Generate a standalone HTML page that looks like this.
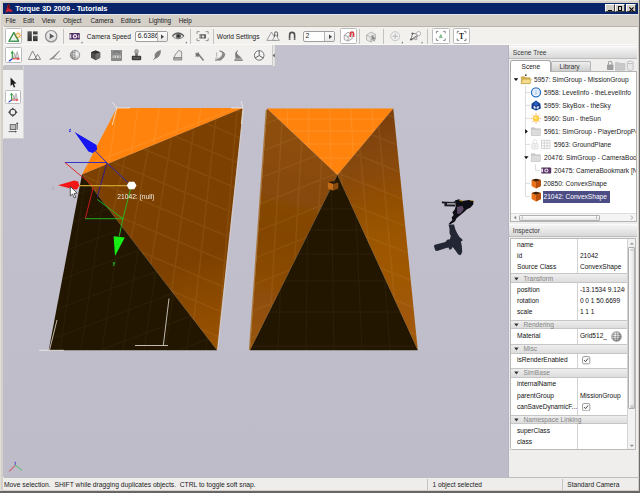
<!DOCTYPE html>
<html><head><meta charset="utf-8"><title>Torque 3D 2009 - Tutorials</title>
<style>
html,body{margin:0;padding:0;}
html{background:#d4d0c8;}
#root{position:absolute;left:0;top:0;width:640px;height:493px;filter:blur(0.35px);}
body{width:640px;height:493px;overflow:hidden;background:#d4d0c8;position:relative;
 font-family:"Liberation Sans",sans-serif;font-size:6.6px;color:#111;line-height:8px;}
.a{position:absolute;}
.t{position:absolute;white-space:pre;}
#title{left:3px;top:2.6px;width:634.6px;height:11.2px;background:#0a246a;}
#title .t{color:#fff;font-weight:bold;font-size:7.45px;left:12.2px;top:2.4px;}
#menu{left:3px;top:13.6px;width:634.6px;height:12.4px;background:#d4d0c8;border-top:0.6px solid #e6e6ee;box-sizing:border-box;}
#menu .t{top:2.5px;font-size:6.4px;color:#222;}
#tb1{left:3px;top:25.6px;width:634.6px;height:19.6px;background:#f2f1ee;border-top:0.8px solid #b9b5ad;border-bottom:0.6px solid #f9f9f8;box-sizing:border-box;}
#view{left:3px;top:45px;width:505.4px;height:432px;background:linear-gradient(#c3c1cd,#bfbcc9);overflow:hidden;}
#tb2{left:3px;top:45.2px;width:269px;height:19.7px;background:#f1f0ee;box-sizing:border-box;}
#ltb{left:3px;top:66px;width:21px;height:73px;background:#efefef;border-right:1px solid #d8d8d8;border-bottom:1px solid #d0d0d0;box-sizing:border-box;}
#rp{left:508px;top:45px;width:129.6px;height:432px;background:#efeeed;border-left:1px solid #b6b4be;box-sizing:border-box;}
#status{left:3px;top:477px;width:634.6px;height:13.4px;background:#eeedec;border-top:1px solid #bdbdbd;box-sizing:border-box;}
#status .t{top:2.5px;color:#222;}
.sel{position:absolute;background:#fff;border:1px solid #bcbcbc;border-radius:1.5px;box-sizing:border-box;}
.hdr{background:linear-gradient(#f5f5f5,#d8d8d8);border-top:1px solid #fbfbfb;border-bottom:1px solid #bdbdbd;box-sizing:border-box;color:#3a3a3a}
.wb{position:absolute;top:1.6px;width:9.4px;height:8px;background:#d4d0c8;box-sizing:border-box;border:0.7px solid;border-color:#fff #404040 #404040 #fff}
.sep{position:absolute;width:1px;background:#c2c2c2;}
</style></head><body><div id="root">
<div id="title" class="a"><span class="t">Torque 3D 2009 - Tutorials</span><svg class="a" style="left:0;top:0" width="14" height="11" viewBox="3 3 14 11"><path d="M8.2,3.6 L5.4,12.8 L8.2,11.6 L12.6,12 L11.4,9.4 L9.2,8.6 L9.6,5.4 Z" fill="#c8202c"/><path d="M8.2,3.6 L7.4,8.4 L9.2,8.6 L9.6,5.4 Z" fill="#7a1018"/></svg><div class="wb" style="left:602.4px"><div class="a" style="left:1.8px;top:5px;width:3.6px;height:1.3px;background:#000"></div></div><div class="wb" style="left:612.2px"><div class="a" style="left:1.4px;top:1.2px;width:4.6px;height:4.4px;border:0.7px solid #000;border-top-width:1.4px;box-sizing:border-box"></div></div><div class="wb" style="left:623.4px"><svg class="a" style="left:1.6px;top:1.4px" width="5" height="5" viewBox="0 0 5 5"><path d="M0.4,0.4 L4.6,4.6 M4.6,0.4 L0.4,4.6" stroke="#000" stroke-width="1.1"/></svg></div></div>
<div id="menu" class="a"><span class="t" style="left:2.5px">File</span><span class="t" style="left:20px">Edit</span><span class="t" style="left:38.7px">View</span><span class="t" style="left:60px">Object</span><span class="t" style="left:87.5px">Camera</span><span class="t" style="left:117.7px">Editors</span><span class="t" style="left:145.7px">Lighting</span><span class="t" style="left:175.7px">Help</span></div>
<div id="tb1" class="a"><div class="a" style="left:0;top:0.6px"><div class="sel" style="left:2.2px;top:1.2px;width:17.3px;height:15.8px"></div><div class="sel" style="left:336.8px;top:1.2px;width:17.5px;height:15.8px"></div><div class="sel" style="left:429.0px;top:1.0px;width:17.5px;height:15.6px"></div><div class="sel" style="left:450.0px;top:1.0px;width:17.2px;height:15.6px"></div><div class="sep" style="left:60.2px;top:2px;height:15px"></div><div class="sep" style="left:187.0px;top:2px;height:15px"></div><div class="sep" style="left:210.0px;top:2px;height:15px"></div><div class="sep" style="left:356.0px;top:2px;height:15px"></div><div class="sep" style="left:380.0px;top:2px;height:15px"></div><div class="sep" style="left:424.0px;top:2px;height:15px"></div><div class="a" style="left:132.2px;top:3.4px;width:32.4px;height:11.2px;background:#fdfdfd;border:1px solid #9f9f9f;border-radius:2px;box-sizing:border-box;overflow:hidden"><span class="t" style="left:1.6px;top:0.9px;font-size:6.8px;color:#222">6.6386</span><div class="a" style="left:20.4px;top:0;width:11.0px;height:10px;background:linear-gradient(#fbfbfb,#e6e6e6);border-left:1px solid #b4b4b4"></div><svg class="a" style="left:24.0px;top:2.2px" width="5" height="6" viewBox="0 0 5 6"><path d="M1,0.6 L4,2.8 L1,5 Z" fill="#444"/></svg></div><div class="a" style="left:300.0px;top:3.4px;width:31.6px;height:11.2px;background:#fdfdfd;border:1px solid #9f9f9f;border-radius:2px;box-sizing:border-box;overflow:hidden"><span class="t" style="left:1.6px;top:0.9px;font-size:6.8px;color:#222">2</span><div class="a" style="left:20.4px;top:0;width:10.2px;height:10px;background:linear-gradient(#fbfbfb,#e6e6e6);border-left:1px solid #b4b4b4"></div><svg class="a" style="left:24.0px;top:2.2px" width="5" height="6" viewBox="0 0 5 6"><path d="M1,0.6 L4,2.8 L1,5 Z" fill="#444"/></svg></div><span class="t" style="left:83.8px;top:5.799999999999997px;font-size:6.55px;color:#222">Camera Speed</span><span class="t" style="left:213.8px;top:5.700000000000003px;font-size:6.6px;color:#222">World Settings</span><svg class="a" style="left:0;top:-1px" width="634" height="19" viewBox="3 26 634 19"><defs><filter id="b4"><feGaussianBlur stdDeviation="0.3"/></filter><linearGradient id="gd" x1="0" y1="0" x2="0" y2="1"><stop offset="0" stop-color="#5a5a5a"/><stop offset="1" stop-color="#2e2e2e"/></linearGradient><radialGradient id="sg2" cx="0.62" cy="0.38" r="0.75"><stop offset="0" stop-color="#fbfbfb"/><stop offset="0.65" stop-color="#c4c4c4"/><stop offset="1" stop-color="#777"/></radialGradient><radialGradient id="gp" cx="0.5" cy="0.4" r="0.7"><stop offset="0" stop-color="#fafafa"/><stop offset="1" stop-color="#d0d0d0"/></radialGradient></defs><g filter="url(#b4)"><path d="M13.8,32.6 L9,41.2 H18.7 Z" fill="#eef5ee" stroke="#3f9450" stroke-width="1.1" stroke-linejoin="round"/><g stroke="#f09a3a" stroke-width="0.7"><path d="M18,31.6 v7.6 M14.2,35.4 h7.6 M15.3,32.7 l5.4,5.4 M20.7,32.7 l-5.4,5.4"/></g><circle cx="18" cy="35.4" r="2.1" fill="#fde9b8" stroke="#f0922e" stroke-width="0.7"/><path d="M13.8,32.6 L9,41.2 H18.7 Z" fill="none" stroke="#3f9450" stroke-width="1.1" stroke-linejoin="round"/><rect x="27.5" y="31.3" width="4.3" height="9.8" fill="url(#gd)"/><rect x="33" y="31.3" width="4.6" height="3.1" fill="url(#gd)"/><rect x="33" y="35.8" width="4.6" height="5.3" fill="url(#gd)"/><circle cx="51.2" cy="36.2" r="5.7" fill="url(#gp)" stroke="#8e8e8e" stroke-width="1.2"/><path d="M49.7,33.3 V39.1 L54.2,36.2 Z" fill="#5a5a5a"/><rect x="69.3" y="33" width="10.6" height="6.6" rx="0.9" fill="#4f2f60"/><rect x="69.3" y="34.2" width="2" height="4.2" fill="#d9cfe0"/><circle cx="75" cy="36.3" r="2.2" fill="#efe9f3"/><circle cx="75" cy="36.3" r="1.1" fill="#6a4a7c"/><rect x="78" y="34.6" width="1.3" height="3.4" fill="#b8a6c4"/><path d="M82.6,41.4 v1.8 h-1.8 z M187,41.4 v1.8 h-1.8 z M403,41.4 v1.8 h-1.8 z M422.6,41.4 v1.8 h-1.8 z" fill="#666"/><path d="M172.4,36.3 Q178,30.6 184,36.3 Q178,41.4 172.4,36.3 Z" fill="#e4e4e4" stroke="#7a7a7a" stroke-width="0.9"/><circle cx="178.4" cy="36" r="2.6" fill="#6c6c6c"/><circle cx="178.4" cy="36" r="1.3" fill="#2c2c2c"/><path d="M172.4,35.6 Q178,30 184,35.8" fill="none" stroke="#5a5a5a" stroke-width="1.1"/><g fill="none" stroke="#8c8c8c" stroke-width="0.9"><path d="M197,34 V31.6 H199.6 M205.6,31.6 H208.2 V34 M208.2,38.2 V40.6 H205.6 M199.6,40.6 H197 V38.2"/></g><rect x="199.4" y="34.3" width="6.6" height="4.3" rx="0.5" fill="#5e5e5e"/><circle cx="203" cy="36.5" r="1.2" fill="#ddd"/><rect x="199.4" y="35.2" width="1.2" height="2.4" fill="#cfcfcf"/><path d="M271.5,32 L266.8,40.4 H276 Z" fill="#f2f2f2" stroke="#8a8a8a" stroke-width="0.8"/><path d="M275.6,34.6 L272.4,40.4 H279.4 Z" fill="#f2f2f2" stroke="#8a8a8a" stroke-width="0.8"/><path d="M274.6,36.6 v-3.2 a1.5,1.6 0 0 1 3,0 v3.2" fill="none" stroke="#5a5a5a" stroke-width="1"/><path d="M289.6,40 V35 a2.5,2.6 0 0 1 5,0 V40" fill="none" stroke="#505050" stroke-width="1.6"/><path d="M288.6,38.8 h2 M293.6,38.8 h2" stroke="#cfcfcf" stroke-width="0.6"/><path d="M344.2,35.2 L348,32.4 L352.2,33.6 V38.6 L348.2,41 L344.2,39.6 Z M344.2,35.2 L348.2,36.6 L352.2,33.6 M348.2,36.6 V41" fill="#f3f3f3" stroke="#8a8a8a" stroke-width="0.7" stroke-linejoin="round"/><path d="M350.4,37 V33.6 a1.6,1.7 0 0 1 3.2,0 V37" fill="none" stroke="#e0383c" stroke-width="1.5"/><path d="M366.6,35 L371,32 L375.4,34.4 V39.4 L371,42 L366.6,40 Z M366.6,35 L371,37 L375.4,34.4 M371,37 V42" fill="#e6e6e6" stroke="#a4a4a4" stroke-width="0.7" stroke-linejoin="round"/><path d="M371.6,34.6 L371.8,40.6 L373.2,39.2 L374.2,41.4 L375,41 L374,38.9 L375.8,38.7 Z" fill="#8c8c8c"/><circle cx="395.2" cy="36.2" r="4.5" fill="#f0f0f0" stroke="#c2c2c2" stroke-width="0.9"/><path d="M395.2,33.4 v5.6 M392.4,36.2 h5.6" stroke="#aaa" stroke-width="0.8"/><path d="M411,39.6 L412.6,33.4 L419,34.2 L415.6,38.4 Z M411,39.6 L419,34.2" fill="none" stroke="#6a6a6a" stroke-width="0.8"/><circle cx="418.6" cy="33.6" r="2.1" fill="#fafafa" stroke="#9a9a9a" stroke-width="0.7"/><circle cx="412.4" cy="33.6" r="1.1" fill="#666"/><circle cx="411" cy="39.6" r="1" fill="#555"/><circle cx="415.8" cy="38.4" r="1.3" fill="#ddd" stroke="#777" stroke-width="0.6"/><g fill="none" stroke="#6a6a6a" stroke-width="0.8"><path d="M436.40000000000003,33.4 V31.4 H438.40000000000003 M443.2,31.4 H445.2 V33.4 M445.2,38.4 V40.4 H443.2 M438.40000000000003,40.4 H436.40000000000003 V38.4"/></g><g fill="none" stroke="#6a6a6a" stroke-width="0.8"><path d="M457.20000000000005,33.4 V31.4 H459.20000000000005 M464.0,31.4 H466.0 V33.4 M466.0,38.4 V40.4 H464.0 M459.20000000000005,40.4 H457.20000000000005 V38.4"/></g><path d="M439.4,37.6 L440.8,34.6 L442.2,37.6 Z" fill="#9fd0a0" stroke="#4a9a52" stroke-width="0.6"/></g><text x="459.1" y="38.6" font-family="Liberation Serif,serif" font-weight="bold" font-size="7.4" fill="#222">T</text></svg></div></div>
<div id="view" class="a"><svg class="a" style="left:0;top:0" width="506" height="432" viewBox="3 45 506 432">
<defs>
<filter id="b1" x="-20%" y="-20%" width="140%" height="140%"><feGaussianBlur stdDeviation="0.9"/></filter>
<filter id="b2"><feGaussianBlur stdDeviation="0.45"/></filter>
<filter id="b5" x="-20%" y="-20%" width="140%" height="140%"><feGaussianBlur stdDeviation="0.55"/></filter>
<linearGradient id="gB" gradientUnits="userSpaceOnUse" x1="160" y1="150" x2="220" y2="345"><stop offset="0" stop-color="#7b3f00"/><stop offset="0.55" stop-color="#7d4001"/><stop offset="1" stop-color="#9a5306"/></linearGradient>
<linearGradient id="gE" gradientUnits="userSpaceOnUse" x1="305" y1="125" x2="255" y2="345"><stop offset="0" stop-color="#8e4f0f"/><stop offset="0.5" stop-color="#834503"/><stop offset="1" stop-color="#98540a"/></linearGradient>
<linearGradient id="gF" gradientUnits="userSpaceOnUse" x1="365" y1="125" x2="412" y2="345"><stop offset="0" stop-color="#7d4108"/><stop offset="0.55" stop-color="#9e5705"/><stop offset="1" stop-color="#a25a08"/></linearGradient>
<clipPath id="cl1"><polygon points="116.8,108 243,108 217,350.3 48.7,350.3 82,174.6"/></clipPath>
<clipPath id="cl2"><polygon points="267,108.5 393.3,108.5 417.8,350.3 250,350.3"/></clipPath>
</defs>
<g filter="url(#b2)">
<!-- left convex shape -->
<polygon points="116.8,108 243,108 82,174.6" fill="#ff830a"/>
<polygon points="243,108 217,350.3 82,174.6" fill="url(#gB)"/>
<polygon points="82,174.6 217,350.3 48.7,350.3" fill="#241805"/>
<!-- right convex shape -->
<polygon points="267,108.5 393.3,108.5 337.4,175" fill="#ff830a"/>
<polygon points="267,108.5 337.4,175 250,350.3" fill="url(#gE)"/>
<polygon points="393.3,108.5 417.8,350.3 337.4,175" fill="url(#gF)"/>
<polygon points="337.4,175 417.8,350.3 250,350.3" fill="#241805"/>
<!-- little cube -->
<polygon points="327.9,182.2 333,180.9 338.3,182.6 333.1,184" fill="#2c1d07"/>
<polygon points="327.9,182.2 333.1,184 333.1,190.5 327.9,188.4" fill="#c46c12"/>
<polygon points="333.1,184 338.3,182.6 338.3,188.4 333.1,190.5" fill="#8a4a08"/>
</g>
<!-- subtle grid texture -->
<clipPath id="cA"><polygon points="116.8,108 243,108 82,174.6"/></clipPath>
<clipPath id="cB"><polygon points="243,108 217,350.3 82,174.6"/></clipPath>
<clipPath id="cC"><polygon points="82,174.6 217,350.3 48.7,350.3"/></clipPath>
<clipPath id="cD"><polygon points="267,108.5 393.3,108.5 337.4,175"/></clipPath>
<clipPath id="cE"><polygon points="267,108.5 337.4,175 250,350.3"/></clipPath>
<clipPath id="cF"><polygon points="393.3,108.5 417.8,350.3 337.4,175"/></clipPath>
<clipPath id="cG"><polygon points="337.4,175 417.8,350.3 250,350.3"/></clipPath>
<g fill="none" stroke-width="0.9" filter="url(#b2)">
<g clip-path="url(#cA)" stroke="#ffd9a8" stroke-width="1.3" opacity="0.12"><path d="M250,102.9 L40,182.7 M250,128.9 L40,208.7 M250,154.9 L40,234.7 M250,180.4 L40,260.2 M250,207.9 L40,287.7 M250,235.9 L40,315.7 M250,263.9 L40,343.7 M250,293.4 L40,373.2 M250,322.9 L40,402.7 M250,354.9 L40,434.7 M75.0,108 L39.0,350 M96.0,108 L60.0,350 M117.0,108 L81.0,350 M138.0,108 L102.0,350 M159.0,108 L123.0,350 M180.0,108 L144.0,350 M201.0,108 L165.0,350 M222.6,108 L186.6,350 M241.8,108 L205.8,350"/></g>
<g clip-path="url(#cB)" stroke="#c89858" stroke-width="1.6" opacity="0.13"><path d="M80,18.3 L250,89.7 M80,44.3 L250,115.7 M80,70.3 L250,141.7 M80,96.3 L250,167.7 M80,122.3 L250,193.7 M80,148.3 L250,219.7 M80,174.3 L250,245.7 M80,200.3 L250,271.7 M80,226.3 L250,297.7 M80,252.3 L250,323.7 M80,278.3 L250,349.7 M80,304.3 L250,375.7 M80,330.3 L250,401.7 M97.2,100 L28.1,355 M117.3,100 L55.1,355 M137.4,100 L82.1,355 M157.5,100 L109.0,355 M177.6,100 L136.0,355 M197.7,100 L163.0,355 M217.8,100 L190.0,355 M237.9,100 L217.0,355"/></g>
<g clip-path="url(#cC)" stroke="#8a7048" stroke-width="1.3" opacity="0.09"><path d="M250,102.9 L40,182.7 M250,128.9 L40,208.7 M250,154.9 L40,234.7 M250,180.4 L40,260.2 M250,207.9 L40,287.7 M250,235.9 L40,315.7 M250,263.9 L40,343.7 M250,293.4 L40,373.2 M250,322.9 L40,402.7 M250,354.9 L40,434.7 M75.0,108 L39.0,350 M96.0,108 L60.0,350 M117.0,108 L81.0,350 M138.0,108 L102.0,350 M159.0,108 L123.0,350 M180.0,108 L144.0,350 M201.0,108 L165.0,350 M222.6,108 L186.6,350 M241.8,108 L205.8,350"/></g>
<g clip-path="url(#cD)" stroke="#ffd9a8" stroke-width="1.3" opacity="0.12"><path d="M245,119 L425,119 M245,131 L425,131 M245,144 L425,144 M245,158 L425,158 M245,173 L425,173 M245,190 L425,190 M245,209 L425,209 M245,230 L425,230 M245,254 L425,254 M245,281 L425,281 M245,312 L425,312 M245,346 L425,346 M288,108 L278,350 M309,108 L306,350 M330,108 L334,350 M351,108 L362,350 M372,108 L390,350"/></g>
<g clip-path="url(#cE)" stroke="#c89858" stroke-width="1.6" opacity="0.13"><path d="M240,134.0 L345,92.0 M240,160.0 L345,118.0 M240,186.0 L345,144.0 M240,212.0 L345,170.0 M240,238.0 L345,196.0 M240,264.0 L345,222.0 M240,290.0 L345,248.0 M240,316.0 L345,274.0 M240,342.0 L345,300.0 M240,368.0 L345,326.0 M240,394.0 L345,352.0 M240,420.0 L345,378.0 M262,105 L247.0,355 M283,105 L268.0,355 M304,105 L289.0,355 M325,105 L310.0,355 M346,105 L331.0,355"/></g>
<g clip-path="url(#cF)" stroke="#c89858" stroke-width="1.6" opacity="0.13"><path d="M330,92.0 L425,130.0 M330,118.0 L425,156.0 M330,144.0 L425,182.0 M330,170.0 L425,208.0 M330,196.0 L425,234.0 M330,222.0 L425,260.0 M330,248.0 L425,286.0 M330,274.0 L425,312.0 M330,300.0 L425,338.0 M330,326.0 L425,364.0 M330,352.0 L425,390.0 M330,378.0 L425,416.0 M335,105 L357.5,355 M356,105 L378.5,355 M377,105 L399.5,355 M398,105 L420.5,355"/></g>
<g clip-path="url(#cG)" stroke="#8a7048" stroke-width="1.3" opacity="0.09"><path d="M245,119 L425,119 M245,131 L425,131 M245,144 L425,144 M245,158 L425,158 M245,173 L425,173 M245,190 L425,190 M245,209 L425,209 M245,230 L425,230 M245,254 L425,254 M245,281 L425,281 M245,312 L425,312 M245,346 L425,346 M288,108 L278,350 M309,108 L306,350 M330,108 L334,350 M351,108 L362,350 M372,108 L390,350"/></g>
</g>
<!-- edge highlights -->
<g filter="url(#b2)" fill="none">
<path d="M266.4,110 L249.6,350" stroke="#a05a0a" stroke-width="1.4" opacity="0.7"/>
<path d="M243.5,110 L217.8,350" stroke="#f3dcc4" stroke-width="0.7" opacity="0.55"/>
</g>
<!-- bounding box corner markers -->
<g stroke="#f4f0ea" stroke-width="0.8" fill="none" opacity="0.95" filter="url(#b2)">
<path d="M112.3,102 L116.8,108 L130,108 M116.8,108 L112.3,125"/>
<path d="M241,101 L243,108 M231,108 L243,108 M243,108 L241.3,124"/>
<path d="M39,350.3 L64,350.3 M57,320 L49.5,350"/>
<path d="M135,345.5 L168,345.5 M169,298.5 L163.3,345.5"/>
</g>
<!-- transform gizmo -->
<g fill="none" stroke-width="0.9" filter="url(#b2)">
<path d="M64.9,162.5 L106.8,162.5 M95.4,151 L106.8,162.8 L127.8,182.4" stroke="#2424c8"/>
<path d="M106.8,163 L97.2,197" stroke="#2a1c90"/>
<path d="M64.9,162.5 L93.5,186.3 L85.3,218.6" stroke="#e01818"/>
<path d="M85.3,218.7 L122.9,218.7 M97.3,199.5 L122.9,218.7 M130.6,189 L122.9,218.7 L119.2,236.5" stroke="#22c022"/>
<path d="M79,185.7 L127.5,185.7" stroke="#c9a22e" stroke-width="1.3"/>
<polygon points="74.6,132 96.5,145 97.2,149.5 92.7,152.9 88.4,151.6" fill="#1212f2" stroke="none"/>
<polygon points="58,185.3 74.3,180.6 78,181.5 79.3,185.3 77,189.6 73.5,189.2" fill="#f51414" stroke="none"/>
<polygon points="113.6,236.2 124.8,237.6 115,256" fill="#14ee14" stroke="none"/>
<polygon points="126.7,185.5 129,181.8 134.2,181.8 136.6,185.5 134.2,189.3 129,189.3" fill="#fff" stroke="none"/>
</g>
<text x="68.8" y="132.4" font-size="5" font-weight="bold" fill="#2020e0" font-family="Liberation Sans,sans-serif">z</text>
<text x="112.4" y="264.8" font-size="5.4" font-weight="bold" fill="#22c422" font-family="Liberation Sans,sans-serif">y</text>
<text x="51.8" y="189.5" font-size="5" fill="#a8a4a8" font-family="Liberation Sans,sans-serif">x</text>
<text x="117.3" y="198.7" font-size="6.68" fill="#f2efe8" font-family="Liberation Sans,sans-serif">21042: (null)</text>
<!-- mouse cursor -->
<path d="M70.3,186.3 L70.3,196 L72.5,194 L74.3,198 L75.8,197.3 L74.1,193.4 L77.1,193.2 Z" fill="#fff" stroke="#222" stroke-width="0.7" stroke-linejoin="round"/>
<!-- player shadow -->
<g filter="url(#b5)" fill="#222836">
<path d="M448.5,224.6 L454,224.6 L455.4,229.6 L457.2,233.3 L459.5,236.9 L462.2,239.2 L462.7,240.6 L460.9,241.5 L461.8,246.1 L462.2,251.5 L461.3,254.3 L460,255.2 L458.1,254.3 L455.4,250.6 L452.7,247 L451.3,249.2 L449.5,249.7 L448.5,247.4 L446.3,247.9 L437.1,251.1 L435.3,250.6 L433.9,246.1 L434.8,244.7 L445.4,241.9 L447.2,239.7 L449.9,239.2 L450.8,236 L449.5,233.3 L449.5,228.7 Z"/>
</g>
<!-- player figure -->
<g filter="url(#b2)">
<path d="M441.9,201 L455,201.4 L455,203.2 L447,203.2 L447,204.4 L455,204.6 L455,206.4 L444.4,206.2 L444.4,203.4 L441.9,203.2 Z" fill="#1e1e26"/>
<path d="M442.4,201.2 L453.6,201.6" stroke="#d8d8e0" stroke-width="0.7"/>
<path d="M454.9,200.4 L458.9,199.3 L462.5,200.9 L468.6,199.9 L473.5,200.9 L473.2,204.5 L470.3,207.7 L467,209.3 L463.5,212.6 L460.5,215 L456.5,218.2 L454.9,221.5 L450,224.4 L448.9,223.6 L452.4,219.9 L451.6,217.4 L453.7,215 L452.4,212.6 L454.9,209.3 L455.7,206.1 Z" fill="#100e14"/>
<path d="M457,206.9 L462.5,205.8 L463.8,209.3 L460.5,213.4 L457.3,213.9 Z" fill="#5c4a68"/>
<path d="M459.4,199.9 L463,200.5 L462.8,201.5 L459.4,201 Z M470.6,199.7 L473.2,200.1 L473.1,201.1 L470.6,200.8 Z" fill="#b89a28"/>
</g>
<!-- axis indicator -->
<g stroke-width="1.1" fill="none" stroke-linecap="round" filter="url(#b2)" opacity="0.75">
<path d="M15.3,465.3 L15.3,462" stroke="#3535d8"/>
<path d="M15.3,465.3 L9.4,471.2" stroke="#c84a58"/>
<path d="M15.3,465.3 L22,470.4" stroke="#4fc06a"/>
</g>
</svg></div>
<div id="tb2" class="a"><div class="sel" style="left:2.2px;top:2.299999999999997px;width:17.3px;height:15.7px"></div><div class="a" style="left:268.9px;top:0.2px;width:4px;height:20.2px;background:linear-gradient(90deg,#bcbcbc,#ececec 40%,#dadada 70%,#b4b4b4)"></div><svg class="a" style="left:0;top:0" width="272" height="20" viewBox="3 45 272 20"><g filter="url(#b4)"><path d="M12.3,59 V52.4" stroke="#2e9a3a" stroke-width="1.1"/><path d="M10.6,53.6 L12.3,50.6 L14,53.6 Z" fill="#2e9a3a"/><path d="M15.6,57.4 L17.2,51.6 L18.8,57.4 Z M13.4,57.6 L14.6,53.4 L15.8,57.6 Z" fill="#e4e4e4" stroke="#8c8c8c" stroke-width="0.6"/><path d="M12.3,58.8 L9.6,60.8" stroke="#2c4cc8" stroke-width="1.2"/><path d="M8.4,61.6 L10.9,61.2 L9.7,59.6 Z" fill="#2c4cc8"/><path d="M12.3,58.8 H18" stroke="#d83a3a" stroke-width="1.1"/><path d="M17.4,57.3 L20.2,58.8 L17.4,60.3 Z" fill="#d83a3a"/><path d="M32.6,51 L28.4,59.4 H37 Z M37.6,54.4 L34.4,59.4 H40.6 Z" fill="#f4f4f4" stroke="#6c6c6c" stroke-width="0.8" stroke-linejoin="round"/><path d="M59.6,50.8 L52.4,57.4 L50.2,59.2 L53.2,58.4 Z" fill="#8a8a8a" stroke="#666" stroke-width="0.5"/><path d="M49.4,59.6 Q53,57.8 56,59 T61,58.2" fill="none" stroke="#8a8a8a" stroke-width="0.7"/><circle cx="75" cy="55" r="4.7" fill="url(#sg2)" stroke="#7c7c7c" stroke-width="0.7"/><path d="M75,50.4 V59.6 M70.4,55 H75 M71,52.6 H75 M71,57.4 H75 M72.6,50.9 Q71.4,55 72.6,59.1" fill="none" stroke="#666" stroke-width="0.5"/><path d="M91,52.2 L95.6,50.6 L100.2,52.2 V57.8 L95.6,60.2 L91,57.8 Z" fill="#4e4e4e"/><path d="M91,52.2 L95.6,50.6 L100.2,52.2 L95.6,53.8 Z" fill="#2e2e2e"/><path d="M95.6,53.8 L100.2,52.2 V57.8 L95.6,60.2 Z" fill="#6c6c6c"/><rect x="111.6" y="50.6" width="10" height="10" fill="#8c8c8c" stroke="#6a6a6a" stroke-width="0.6"/><path d="M112.6,55.4 h8 v2.6 h-8 z" fill="#d9d9d9"/><path d="M114,55.4 v2.6 M116.6,55.4 v2.6 M119.2,55.4 v2.6 M113,53 l3,-1.6 l4,1" stroke="#5a5a5a" stroke-width="0.6" fill="none"/><rect x="131.8" y="55.8" width="9.4" height="4.4" rx="1" fill="#3c3c3c"/><rect x="135.2" y="52.6" width="2.6" height="3.4" fill="#6a6a6a"/><circle cx="136.5" cy="51.4" r="2" fill="#a8a8a8" stroke="#7a7a7a" stroke-width="0.5"/><path d="M133.2,58 h6.6" stroke="#9a9a9a" stroke-width="0.6"/><path d="M160.6,50.4 Q160.6,56.6 155.6,58.4 Q153.6,54.4 156.8,52 Q158.6,50.8 160.6,50.4 Z" fill="#8a8a8a" stroke="#6c6c6c" stroke-width="0.5"/><path d="M159.4,52 L153.4,60" stroke="#5c5c5c" stroke-width="0.7"/><path d="M178.6,50.4 L181.6,51.6 L181.6,56 L181.8,60 H173.6 L173.8,57.4 Q175.4,54 178.6,50.4 Z" fill="#e9e9e9" stroke="#6c6c6c" stroke-width="0.7"/><path d="M173.8,57.6 H181.6 M173.8,58.9 H181.6" stroke="#5a5a5a" stroke-width="0.7"/><path d="M196.2,51.4 l1.2,1.6 l1.8,-0.8 l-0.4,1.9 l1.7,1 l-1.9,0.6 l-0.2,1.9 l-1.4,-1.4 l-1.9,0.5 l0.9,-1.8 l-1.1,-1.6 l2,0.2 Z" fill="#6f6f6f"/><path d="M198.6,54.6 L203.6,60.4" stroke="#7a7a7a" stroke-width="1.5"/><path d="M219.4,50.8 Q224.6,52.6 221.4,56.4 Q219.4,58.8 215,60.2 L220.6,60.2 Q224.6,57.6 224.8,54.6 Q224.6,51.6 219.4,50.8 Z" fill="#8c8c8c" stroke="#666" stroke-width="0.5"/><path d="M216.6,52.4 v4.2 M215.2,58 h3" stroke="#9a9a9a" stroke-width="0.7"/><path d="M238,50.6 Q234.6,52.4 238.4,55.4 Q241.6,57.6 242.6,60.4 H234.6 Q236.6,57.6 235.6,55 Q234.8,52.4 238,50.6 Z" fill="#7c7c7c" stroke="#5c5c5c" stroke-width="0.5"/><path d="M235,58.4 h7 M235.4,59.6 h7.2" stroke="#d9d9d9" stroke-width="0.5"/><circle cx="259.2" cy="55.4" r="4.8" fill="#f3f3f3" stroke="#666" stroke-width="0.9"/><path d="M259.2,55.6 V50.8 M259.2,55.6 L255,58 M259.2,55.6 L263.4,58" stroke="#555" stroke-width="0.9"/></g><path d="M274.7,53.5 L272.7,55.5 L274.7,57.5 Z" fill="#555"/></svg></div>
<div id="ltb" class="a"><div class="a" style="left:0;top:0;width:20px;height:4.2px;background:#c3c3c3"></div><div class="sel" style="left:2px;top:24.400000000000006px;width:16.4px;height:13.4px"></div><svg class="a" style="left:0;top:0" width="21" height="73" viewBox="3 66 21 73"><g filter="url(#b4)"><path d="M10.6,77.6 V86 L12.5,84.3 L13.9,87.6 L15.3,87 L13.9,83.8 L16.4,83.6 Z" fill="#1c1c1c"/><path d="M11.6,100.2 V94.2" stroke="#2e9a3a" stroke-width="1"/><path d="M10.1,95.2 L11.6,92.4 L13.1,95.2 Z" fill="#2e9a3a"/><path d="M14.6,98.8 L16,93.4 L17.4,98.8 Z M12.6,99 L13.7,95.2 L14.8,99 Z" fill="#e4e4e4" stroke="#8c8c8c" stroke-width="0.55"/><path d="M11.6,100 L9.3,101.6" stroke="#2c4cc8" stroke-width="1.1"/><path d="M8.1,102.4 L10.5,102 L9.4,100.5 Z" fill="#2c4cc8"/><path d="M11.6,100 H16.8" stroke="#d83a3a" stroke-width="1"/><path d="M16.3,98.7 L18.9,100 L16.3,101.3 Z" fill="#d83a3a"/><circle cx="12.8" cy="112.2" r="2.9" fill="none" stroke="#4a4a4a" stroke-width="1.1"/><path d="M12.8,107.4 l1.6,2 h-3.2 z M12.8,117 l1.6,-2 h-3.2 z M8,112.2 l2,-1.6 v3.2 z M17.6,112.2 l-2,-1.6 v3.2 z" fill="#4a4a4a"/><rect x="10.2" y="124.6" width="5.6" height="5" fill="#bdbdbd" stroke="#555" stroke-width="0.8"/><path d="M8.6,131.6 H15 M17.2,123.2 V129.6" stroke="#555" stroke-width="0.9"/><path d="M15,130.4 l2,1.2 l-2,1.2 z M16,124 l1.2,-2 l1.2,2 z" fill="#555"/></g></svg></div>
<div id="rp" class="a"><div class="a hdr" style="left:0;top:1px;width:128px;height:12.5px"><span class="t" style="left:3.7999999999999545px;top:1.9px">Scene Tree</span></div><div class="a" style="left:1px;top:25.5px;width:126.5px;height:151.6px;background:#fff;border:1px solid #b4b4b4;box-sizing:border-box"></div><div class="a" style="left:42px;top:16.200000000000003px;width:39.5px;height:9.8px;background:linear-gradient(#eeeeee,#cfcfcf);border:1px solid #b4b4b4;border-bottom:none;border-radius:2px 2px 0 0;box-sizing:border-box"><span class="t" style="left:7.5px;top:0.9px;color:#333">Library</span></div><div class="a" style="left:1px;top:15px;width:41px;height:11.5px;background:#fff;border:1px solid #a8a8a8;border-bottom:none;border-radius:2.5px 2.5px 0 0;box-sizing:border-box"><span class="t" style="left:10.5px;top:1.8px;color:#222">Scene</span></div><svg class="a" style="left:95px;top:14px" width="32" height="13" viewBox="604 59 32 13"><g filter="url(#b3)"><rect x="607" y="64.5" width="6.4" height="5.6" rx="0.8" fill="#9c9c9c"/><path d="M608.4,64.8 v-1.6 a1.8,1.9 0 0 1 3.6,0 v1.6" fill="none" stroke="#a4a4a4" stroke-width="1.1"/><path d="M615.5,62.6 h3.2 l0.9,1 h5.2 v6.6 h-9.3 z" fill="#c9c9c9" stroke="#b0b0b0" stroke-width="0.5"/><path d="M627.3,62.4 v6.8 a2.9,1.2 0 0 0 5.8,0 v-6.8" fill="#e9e9e9" stroke="#b0b0b0" stroke-width="0.7"/><ellipse cx="630.2" cy="62.4" rx="2.9" ry="1.2" fill="#f6f6f6" stroke="#a8a8a8" stroke-width="0.7"/></g></svg><svg class="a" style="left:0;top:0" width="128" height="180" viewBox="509 45 128 180"><defs><filter id="b3"><feGaussianBlur stdDeviation="0.35"/></filter></defs><g stroke="#cfcfcf" stroke-width="0.7" fill="none"><path d="M525.5,86 V196.4 M525.5,92.4 H530 M525.5,105.4 H530 M525.5,118.4 H530 M525.5,144.4 H530 M525.5,183.4 H530 M525.5,196.4 H530 M535.5,164 V170.4 H540"/></g><g filter="url(#b3)"><path d="M513.7,78.2 h4.6 l-2.3,2.8 z" fill="#111"/><path d="M521.3,76.80000000000001 h3.4 l0.8,1 h4.6 v5.8 h-8.8 z" fill="#d9b24a" stroke="#b08a2c" stroke-width="0.5"/><path d="M521.2,83.60000000000001 l1.6,-4.4 h8.6 l-1.6,4.4 z" fill="#f3dc8c" stroke="#b99a3c" stroke-width="0.5"/><rect x="525" y="74.4" width="1.6" height="1.6" fill="#5a4a20"/><circle cx="536" cy="92.4" r="4.5" fill="#fff" stroke="#2a74c6" stroke-width="1.35"/><circle cx="536" cy="92.4" r="3.1" fill="#dfeaf8"/><rect x="535.5" y="91.5" width="1" height="3" fill="#9fc0e8"/><rect x="535.5" y="89.9" width="1" height="1" fill="#9fc0e8"/><path d="M536,100.4 L540.4,103.80000000000001 L540.8,108.60000000000001 L536,110.4 L531.4,108.60000000000001 L531.6,103.80000000000001 Z" fill="#123c8c"/><path d="M536,100.4 L538.4,104.80000000000001 L536,105.80000000000001 L533.8,104.60000000000001 Z" fill="#2a62c4"/><path d="M533.6,105.80000000000001 l2,1 v2.2 l-2,-0.8 z M536.6,106.80000000000001 l2.2,-0.9 v2.3 l-2.2,0.8z" fill="#e8eefc"/><g stroke="#f6a070" stroke-width="1" stroke-dasharray="1.3,7.8"><path d="M536,113.2 v10.4 M530.8,118.4 h10.4 M532.3,114.7 l7.4,7.4 M539.7,114.7 l-7.4,7.4"/></g><circle cx="536" cy="118.4" r="3" fill="#ffd23a" stroke="#f8b84a" stroke-width="0.6"/><circle cx="535.4" cy="117.80000000000001" r="1.3" fill="#ffe890"/><path d="M525.0999999999999,129.1 v4.6 l2.8,-2.3 z" fill="#111"/><path d="M531.3,127.80000000000001 h3.4 l0.8,1 h4.8 v6.6 h-9 z" fill="#cacaca" stroke="#b0b0b0" stroke-width="0.5"/><rect x="531.6" y="129.8" width="8.4" height="5.3" fill="#dcdcdc"/><rect x="531.8" y="143.4" width="6.4" height="5.6" rx="0.8" fill="#f2f2f2" stroke="#dadada" stroke-width="0.7"/><path d="M533.2,143.6 v-2 a1.8,1.9 0 0 1 3.6,0 v2" fill="none" stroke="#dcdcdc" stroke-width="0.8"/><circle cx="535" cy="146.20000000000002" r="1.1" fill="none" stroke="#dadada" stroke-width="0.6"/><g stroke="#bdbdbd" stroke-width="0.6" fill="none"><rect x="541.4" y="140.20000000000002" width="8.6" height="8.4"/><path d="M544.3,140.20000000000002 v8.4 M547.1,140.20000000000002 v8.4 M541.4,143.0 h8.6 M541.4,145.8 h8.6"/></g><path d="M524.0,156.20000000000002 h4.6 l-2.3,2.8 z" fill="#111"/><path d="M531.3,153.8 h3.4 l0.8,1 h4.8 v6.6 h-9 z" fill="#cacaca" stroke="#b0b0b0" stroke-width="0.5"/><rect x="531.6" y="155.8" width="8.4" height="5.3" fill="#dcdcdc"/><rect x="541.2" y="167.4" width="10" height="6.2" rx="0.8" fill="#54305e"/><circle cx="546.4" cy="170.5" r="2.1" fill="#e8e0ee"/><circle cx="546.4" cy="170.5" r="1" fill="#54305e"/><rect x="541.2" y="168.6" width="1.8" height="3.6" fill="#e8e0ee"/><path d="M531.6,180.0 L536,178.8 L541,180.0 L541,186.0 L536,188.4 L531.6,186.0 Z" fill="#e8731a"/><path d="M531.6,180.0 L536,178.8 L541,180.0 L536,181.8 Z" fill="#3a2410"/><path d="M536,181.8 L541,180.0 L541,186.0 L536,188.4 Z" fill="#b8500c"/><path d="M531.6,193.0 L536,191.8 L541,193.0 L541,199.0 L536,201.4 L531.6,199.0 Z" fill="#e8731a"/><path d="M531.6,193.0 L536,191.8 L541,193.0 L536,194.8 Z" fill="#3a2410"/><path d="M536,194.8 L541,193.0 L541,199.0 L536,201.4 Z" fill="#b8500c"/></g></svg><div class="a" style="left:3px;top:27px;width:123.5px;height:140px;overflow:hidden"><div class="a" style="left:31px;top:119px;width:66.5px;height:11.5px;background:#4c4d85"></div><span class="t" style="left:22px;top:3.7px;color:#1c1c1c">5957: SimGroup - MissionGroup</span><span class="t" style="left:32px;top:16.7px;color:#1c1c1c">5958: LevelInfo - theLevelInfo</span><span class="t" style="left:32px;top:29.7px;color:#1c1c1c">5959: SkyBox - theSky</span><span class="t" style="left:32px;top:42.7px;color:#1c1c1c">5960: Sun - theSun</span><span class="t" style="left:32px;top:55.7px;color:#1c1c1c">5961: SimGroup - PlayerDropPoints</span><span class="t" style="left:42px;top:68.7px;color:#1c1c1c">5963: GroundPlane</span><span class="t" style="left:32px;top:81.7px;color:#1c1c1c">20476: SimGroup - CameraBookmarks</span><span class="t" style="left:42px;top:94.7px;color:#1c1c1c">20475: CameraBookmark [NewCamera_0]</span><span class="t" style="left:31.5px;top:107.7px;color:#1c1c1c">20850: ConvexShape</span><span class="t" style="left:31.5px;top:120.7px;color:#fff">21042: ConvexShape</span></div><div class="a" style="left:2px;top:168.2px;width:124.5px;height:7.9px;background:#f4f4f4;border-top:1px solid #dedede;box-sizing:border-box"><div class="a" style="left:8.2px;top:0.4px;width:80.6px;height:6.2px;background:linear-gradient(#fdfdfd,#e4e4e4);border:1px solid #b0b0b0;border-radius:1px;box-sizing:border-box"></div><svg class="a" style="left:0;top:0" width="124" height="7" viewBox="0 0 124 7"><path d="M5.2,1.7 L2.8,3.6 L5.2,5.5 Z" fill="#8a8a8a"/><path d="M119.6,1.7 L122,3.6 L119.6,5.5" fill="none" stroke="#9a9a9a" stroke-width="0.8"/><path d="M11.2,2.2 v3 M85.6,2.2 v3" stroke="#999" stroke-width="0.7"/></svg></div><div class="a hdr" style="left:0;top:178.6px;width:128px;height:13px"><span class="t" style="left:3.7999999999999545px;top:2.5px">Inspector</span></div><div class="a" style="left:1.1999999999999886px;top:192.6px;width:125.5px;height:212.9px;background:#fff;border:1px solid #b9b9b9;border-radius:0 0 0 1.5px;box-sizing:border-box;overflow:hidden"><div class="a" style="left:65.80000000000001px;top:0;width:1px;height:212px;background:#d2d2d2"></div><div class="a" style="left:0;top:34.7px;width:115.8px;height:9.8px;background:linear-gradient(#eeeeee,#dddddd);border-top:1px solid #c6c6c6;border-bottom:1px solid #c6c6c6;box-sizing:border-box"><span class="t" style="left:12.300000000000011px;top:0.5px;color:#858585">Transform</span><svg class="a" style="left:2.8000000000000114px;top:2.4px" width="5" height="4" viewBox="0 0 5 4"><path d="M0.2,0.6 h4.4 l-2.2,2.8 z" fill="#333"/></svg></div><div class="a" style="left:0;top:81.0px;width:115.8px;height:9.8px;background:linear-gradient(#eeeeee,#dddddd);border-top:1px solid #c6c6c6;border-bottom:1px solid #c6c6c6;box-sizing:border-box"><span class="t" style="left:12.300000000000011px;top:0.5px;color:#858585">Rendering</span><svg class="a" style="left:2.8000000000000114px;top:2.4px" width="5" height="4" viewBox="0 0 5 4"><path d="M0.2,0.6 h4.4 l-2.2,2.8 z" fill="#333"/></svg></div><div class="a" style="left:0;top:105.2px;width:115.8px;height:9.8px;background:linear-gradient(#eeeeee,#dddddd);border-top:1px solid #c6c6c6;border-bottom:1px solid #c6c6c6;box-sizing:border-box"><span class="t" style="left:12.300000000000011px;top:0.5px;color:#858585">Misc</span><svg class="a" style="left:2.8000000000000114px;top:2.4px" width="5" height="4" viewBox="0 0 5 4"><path d="M0.2,0.6 h4.4 l-2.2,2.8 z" fill="#333"/></svg></div><div class="a" style="left:0;top:129.4px;width:115.8px;height:9.8px;background:linear-gradient(#eeeeee,#dddddd);border-top:1px solid #c6c6c6;border-bottom:1px solid #c6c6c6;box-sizing:border-box"><span class="t" style="left:12.300000000000011px;top:0.5px;color:#858585">SimBase</span><svg class="a" style="left:2.8000000000000114px;top:2.4px" width="5" height="4" viewBox="0 0 5 4"><path d="M0.2,0.6 h4.4 l-2.2,2.8 z" fill="#333"/></svg></div><div class="a" style="left:0;top:176.0px;width:115.8px;height:9.8px;background:linear-gradient(#eeeeee,#dddddd);border-top:1px solid #c6c6c6;border-bottom:1px solid #c6c6c6;box-sizing:border-box"><span class="t" style="left:12.300000000000011px;top:0.5px;color:#858585">Namespace Linking</span><svg class="a" style="left:2.8000000000000114px;top:2.4px" width="5" height="4" viewBox="0 0 5 4"><path d="M0.2,0.6 h4.4 l-2.2,2.8 z" fill="#333"/></svg></div><span class="t" style="left:5.800000000000011px;top:2.5px">name</span><span class="t" style="left:5.800000000000011px;top:13.6px">id</span><span class="t" style="left:68.69999999999999px;top:13.6px;width:45.60000000000002px;overflow:hidden">21042</span><span class="t" style="left:5.800000000000011px;top:24.7px">Source Class</span><span class="t" style="left:68.69999999999999px;top:24.7px;width:45.60000000000002px;overflow:hidden">ConvexShape</span><span class="t" style="left:5.800000000000011px;top:47.0px">position</span><span class="t" style="left:68.69999999999999px;top:47.0px;width:45.60000000000002px;overflow:hidden">-13.1534 9.12401 2.5</span><span class="t" style="left:5.800000000000011px;top:58.1px">rotation</span><span class="t" style="left:68.69999999999999px;top:58.1px;width:45.60000000000002px;overflow:hidden">0 0 1 50.6699</span><span class="t" style="left:5.800000000000011px;top:69.2px">scale</span><span class="t" style="left:68.69999999999999px;top:69.2px;width:45.60000000000002px;overflow:hidden">1 1 1</span><span class="t" style="left:5.800000000000011px;top:93.6px">Material</span><span class="t" style="left:68.69999999999999px;top:93.6px;width:40px;overflow:hidden">Grid512_</span><span class="t" style="left:5.800000000000011px;top:117.9px">isRenderEnabled</span><svg class="a" style="left:71.09999999999997px;top:117.8px" width="8.6" height="8.6" viewBox="0 0 8 8"><rect x="0.5" y="0.5" width="6.8" height="6.8" rx="1.2" fill="#fbfbfb" stroke="#8d8d8d" stroke-width="0.8"/><path d="M2,3.8 L3.3,5.3 L5.7,2.2" fill="none" stroke="#444" stroke-width="0.9"/></svg><span class="t" style="left:5.800000000000011px;top:141.8px">internalName</span><span class="t" style="left:5.800000000000011px;top:153.0px">parentGroup</span><span class="t" style="left:68.69999999999999px;top:153.0px;width:45.60000000000002px;overflow:hidden">MissionGroup</span><span class="t" style="left:5.800000000000011px;top:164.1px">canSaveDynamicF...</span><svg class="a" style="left:71.09999999999997px;top:164.0px" width="8.6" height="8.6" viewBox="0 0 8 8"><rect x="0.5" y="0.5" width="6.8" height="6.8" rx="1.2" fill="#fbfbfb" stroke="#8d8d8d" stroke-width="0.8"/><path d="M2,3.8 L3.3,5.3 L5.7,2.2" fill="none" stroke="#444" stroke-width="0.9"/></svg><span class="t" style="left:5.800000000000011px;top:188.4px">superClass</span><span class="t" style="left:5.800000000000011px;top:199.5px">class</span><svg class="a" style="left:100.30000000000001px;top:92.00000000000003px" width="11" height="11" viewBox="0 0 11 11"><defs><radialGradient id="sg" cx="0.38" cy="0.35" r="0.75"><stop offset="0" stop-color="#fafafa"/><stop offset="0.6" stop-color="#c9c9c9"/><stop offset="1" stop-color="#6f6f6f"/></radialGradient></defs><circle cx="5.5" cy="5.5" r="4.8" fill="url(#sg)" stroke="#6a6a6a" stroke-width="0.6"/><path d="M5.5,0.8 v9.4 M0.9,5.5 h9.2 M3.2,1.4 q-1.6,4.1 0,8.2 M7.8,1.4 q1.6,4.1 0,8.2 M1.4,3.4 h8.2 M1.4,7.6 h8.2" fill="none" stroke="#555" stroke-width="0.45" opacity="0.8"/></svg><div class="a" style="left:115.80000000000001px;top:0;width:9px;height:212px;background:#f2f2f2;border-left:1px solid #d4d4d4;box-sizing:border-box"><div class="a" style="left:0.3px;top:8.900000000000006px;width:7.2px;height:161.5px;background:linear-gradient(90deg,#fcfcfc,#e2e2e2);border:1px solid #aeaeae;border-radius:1px;box-sizing:border-box"></div><svg class="a" style="left:0;top:0" width="8" height="212" viewBox="0 0 8 212"><path d="M1.8,5.599999999999994 L3.9,3.4000000000000057 L6,5.599999999999994 Z" fill="#8f8f8f"/><path d="M1.8,205.79999999999998 L3.9,208.00000000000003 L6,205.79999999999998 Z" fill="#8f8f8f"/><path d="M2.2,166.79999999999998 h3.4 M2.2,168.29999999999998 h3.4 M2.2,11.0 h3.4" stroke="#999" stroke-width="0.6"/></svg></div></div></div>
<div id="status" class="a"><span class="t" style="left:1px;font-size:6.72px">Move selection.  SHIFT while dragging duplicates objects.  CTRL to toggle soft snap.</span><div class="sep" style="left:423.6px;top:1px;height:11px;background:#c4c4c4"></div><div class="sep" style="left:559.4px;top:1px;height:11px;background:#c4c4c4"></div><span class="t" style="left:429.5px">1 object selected</span><span class="t" style="left:564.3px">Standard Camera</span></div>
<div class="a" style="left:2.5px;top:2.6px;width:0.6px;height:11.2px;background:#0a246a"></div><div class="a" style="left:2.5px;top:13.8px;width:0.6px;height:12.2px;background:#d6d3cd"></div><div class="a" style="left:2.5px;top:26px;width:0.6px;height:40px;background:#efefef"></div><div class="a" style="left:2.5px;top:66px;width:0.6px;height:4.2px;background:#c3c3c3"></div><div class="a" style="left:2.5px;top:70.2px;width:0.6px;height:68.8px;background:#efefef"></div><div class="a" style="left:2.5px;top:139px;width:0.6px;height:338px;background:#c0bdca"></div><div class="a" style="left:2.5px;top:477px;width:0.6px;height:13.4px;background:#eeedec"></div>
<div class="a" style="left:638.6px;top:0;width:1.4px;height:493px;background:#6c6c6c"></div><div class="a" style="left:0;top:491.4px;width:640px;height:1.6px;background:#666"></div><div class="a" style="left:0;top:0;width:638px;height:1px;background:#e6e3dc"></div><div class="a" style="left:0;top:0;width:1px;height:491px;background:#e2dfd8"></div>
</div></body></html>
